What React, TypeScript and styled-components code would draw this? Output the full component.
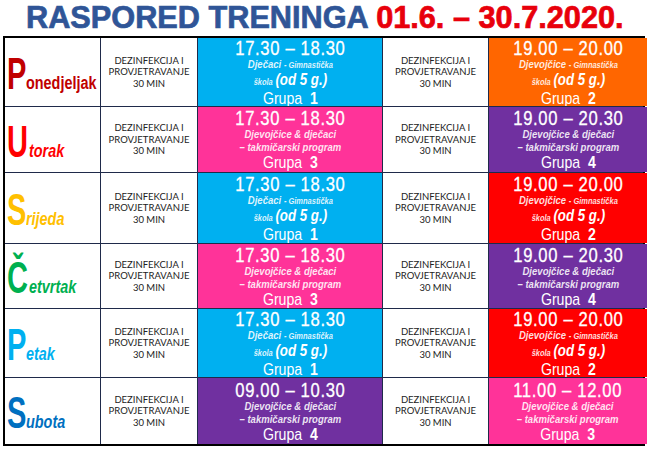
import React from "react";
import styled, { createGlobalStyle } from "styled-components";

const Global = createGlobalStyle`
  html, body { margin: 0; padding: 0; background: #fff; }
  body { width: 650px; height: 451px; overflow: hidden; }
`;

const ARIAL = `"Liberation Sans", Arial, sans-serif`;

const Page = styled.div`
  width: 650px;
  height: 451px;
  display: flex;
  flex-direction: column;
  align-items: stretch;
`;

const Title = styled.h1`
  margin: 0;
  height: 36px;
  display: flex;
  justify-content: center;
  align-items: center;
`;

const TitleText = styled.div`
  display: inline-block;
  white-space: pre;
  font-family: ${ARIAL};
  font-weight: bold;
  font-size: 31px;
  line-height: 36px;
  -webkit-text-stroke: 0.7px currentColor;
  transform: scaleX(0.99);
  transform-origin: center;
`;

const TitleBlue = styled.span`
  color: #2f5597;
`;
const TitleRed = styled.span`
  color: #e8000b;
`;

const Table = styled.div`
  margin-left: 3px;
  width: 638px;
  border: 2px solid #000;
  display: grid;
  grid-template-columns: 95px 96px 184px 105px 158px;
  grid-template-rows: 68px 65px 70px 64px 68px 66px;
  column-gap: 1px;
  row-gap: 1px;
  background: #1f2a4a;
  box-sizing: content-box;
`;

const DayCell = styled.div<{ $c: string }>`
  background: #fff;
  display: flex;
  align-items: center;
  padding-left: 2px;
  font-family: ${ARIAL};
  font-weight: bold;
  color: ${(p) => p.$c};
  overflow: hidden;
`;

const DayLabel = styled.div`
  display: flex;
  align-items: baseline;
  white-space: nowrap;
  margin-top: 4px;
`;

const Initial = styled.span`
  display: inline-block;
  font-size: 44px;
  line-height: 44px;
  transform: scaleX(0.66);
  transform-origin: left center;
  margin-right: -10px;
`;

const Rest = styled.span<{ $italic?: boolean }>`
  display: inline-block;
  font-size: 18px;
  line-height: 20px;
  font-style: ${(p) => (p.$italic ? "italic" : "normal")};
  transform: scaleX(0.8);
  transform-origin: left center;
`;

const DezCell = styled.div`
  background: #fff;
  display: flex;
  flex-direction: column;
  justify-content: center;
  align-items: center;
  font-family: Lato, "Open Sans", sans-serif;
  font-size: 9.5px;
  line-height: 11.5px;
  color: #222;
  text-align: center;
`;

const SlotCell = styled.div<{ $bg: string }>`
  background: ${(p) => p.$bg};
  color: #fff;
  display: flex;
  justify-content: center;
  align-items: center;
  font-family: ${ARIAL};
  text-align: center;
  overflow: hidden;
`;

const SlotInner = styled.div`
  display: flex;
  flex-direction: column;
  align-items: center;
  white-space: nowrap;
  transform: scaleX(0.83);
  transform-origin: center;
`;

const Time = styled.div`
  font-size: 20px;
  line-height: 20px;
  letter-spacing: 0.8px;
  -webkit-text-stroke: 0.3px #fff;
`;

const Sub = styled.div`
  font-size: 11.5px;
  line-height: 13px;
  font-style: italic;
  font-weight: bold;
  color: rgba(255, 255, 255, 0.88);
`;

const Tiny = styled.span`
  font-size: 9px;
`;

const Big = styled.span`
  font-size: 16px;
  color: #fff;
`;

const SubSchool = styled(Sub)`
  line-height: 16px;
`;

const Group = styled.div`
  font-size: 17px;
  line-height: 17px;
  white-space: pre;
`;

const GroupNum = styled.b`
  font-weight: bold;
`;

type Slot = { time: string; kind: "boys" | "girls" | "comp"; group: number; bg: string };

const COLORS = {
  blue: "#00b0f0",
  pink: "#ff3399",
  orange: "#ff6600",
  purple: "#7030a0",
  red: "#ff0000",
};

const days: {
  initial: string;
  rest: string;
  italic: boolean;
  color: string;
  a: Slot;
  b: Slot;
}[] = [
  {
    initial: "P", rest: "onedjeljak", italic: false, color: "#c00000",
    a: { time: "17.30 – 18.30", kind: "boys", group: 1, bg: COLORS.blue },
    b: { time: "19.00 – 20.00", kind: "girls", group: 2, bg: COLORS.orange },
  },
  {
    initial: "U", rest: "torak", italic: true, color: "#ff0000",
    a: { time: "17.30 – 18.30", kind: "comp", group: 3, bg: COLORS.pink },
    b: { time: "19.00 – 20.30", kind: "comp", group: 4, bg: COLORS.purple },
  },
  {
    initial: "S", rest: "rijeda", italic: true, color: "#ffc000",
    a: { time: "17.30 – 18.30", kind: "boys", group: 1, bg: COLORS.blue },
    b: { time: "19.00 – 20.00", kind: "girls", group: 2, bg: COLORS.red },
  },
  {
    initial: "Č", rest: "etvrtak", italic: true, color: "#00b050",
    a: { time: "17.30 – 18.30", kind: "comp", group: 3, bg: COLORS.pink },
    b: { time: "19.00 – 20.30", kind: "comp", group: 4, bg: COLORS.purple },
  },
  {
    initial: "P", rest: "etak", italic: true, color: "#00b0f0",
    a: { time: "17.30 – 18.30", kind: "boys", group: 1, bg: COLORS.blue },
    b: { time: "19.00 – 20.00", kind: "girls", group: 2, bg: COLORS.red },
  },
  {
    initial: "S", rest: "ubota", italic: true, color: "#0070c0",
    a: { time: "09.00 – 10.30", kind: "comp", group: 4, bg: COLORS.purple },
    b: { time: "11.00 – 12.00", kind: "comp", group: 3, bg: COLORS.pink },
  },
];

function Dez() {
  return (
    <DezCell>
      <div>DEZINFEKCIJA I</div>
      <div>PROVJETRAVANJE</div>
      <div>30 MIN</div>
    </DezCell>
  );
}

function SlotView({ s }: { s: Slot }) {
  return (
    <SlotCell $bg={s.bg}>
      <SlotInner>
        <Time>{s.time}</Time>
        {s.kind === "comp" ? (
          <>
            <Sub>Djevojčice &amp; dječaci</Sub>
            <Sub>– takmičarski program</Sub>
          </>
        ) : (
          <>
            <Sub>
              {s.kind === "boys" ? "Dječaci" : "Djevojčice"} <Tiny>- Gimnastička</Tiny>
            </Sub>
            <SubSchool>
              <Tiny>škola</Tiny> <Big>(od 5 g.)</Big>
            </SubSchool>
          </>
        )}
        <Group>
          {"Grupa  "}
          <GroupNum>{s.group}</GroupNum>
        </Group>
      </SlotInner>
    </SlotCell>
  );
}

export default function App() {
  return (
    <Page>
      <Global />
      <Title>
        <TitleText>
          <TitleBlue>RASPORED TRENINGA </TitleBlue>
          <TitleRed>01.6. – 30.7.2020.</TitleRed>
        </TitleText>
      </Title>
      <Table>
        {days.map((d, i) => (
          <React.Fragment key={i}>
            <DayCell $c={d.color}>
              <DayLabel>
                <Initial>{d.initial}</Initial>
                <Rest $italic={d.italic}>{d.rest}</Rest>
              </DayLabel>
            </DayCell>
            <Dez />
            <SlotView s={d.a} />
            <Dez />
            <SlotView s={d.b} />
          </React.Fragment>
        ))}
      </Table>
    </Page>
  );
}
